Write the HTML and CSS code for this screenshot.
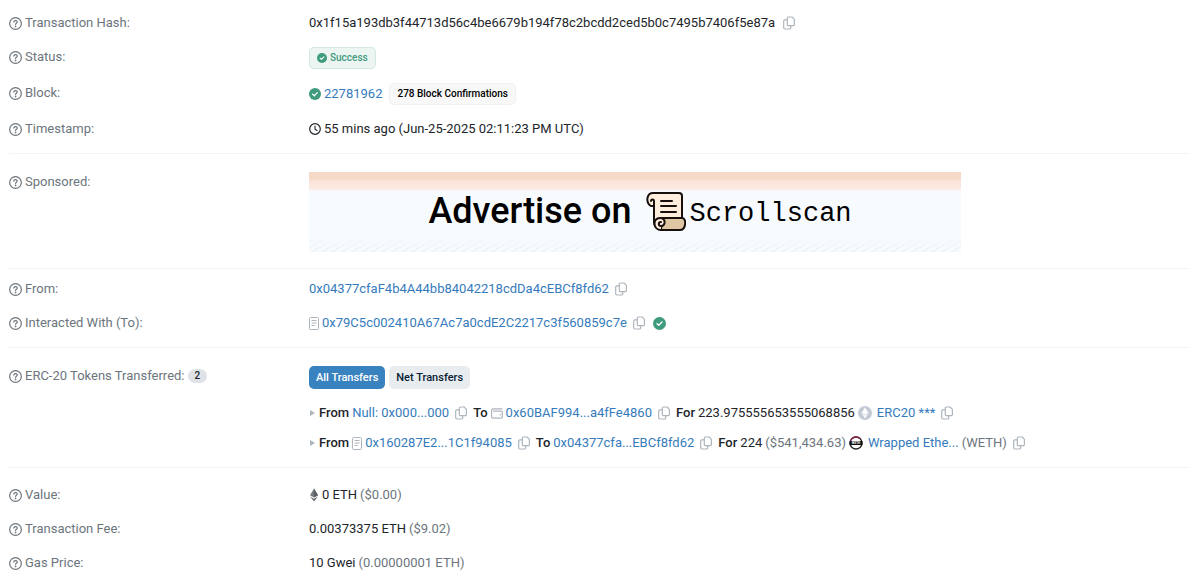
FILE: index.html
```
<!DOCTYPE html>
<html lang="en">
<head>
  <meta charset="UTF-8">
  <meta name="viewport" content="width=device-width, initial-scale=1">
  <title>Transaction Details</title>
  <link rel="stylesheet" href="styles.css">
</head>
<body>

<!-- shared icons -->
<svg class="sprite" aria-hidden="true">
  <symbol id="help" viewBox="0 0 14 14">
    <circle cx="7" cy="7" r="6.3" fill="none" stroke="currentColor" stroke-width="1.3"/>
    <path d="M5.2 5.5c0-1 .7-1.6 1.7-1.6h.3c1 0 1.7.6 1.7 1.5 0 1.2-1.8 1.3-1.8 2.5" fill="none" stroke="currentColor" stroke-width="1.3" stroke-linecap="round"/>
    <circle cx="7.1" cy="10.1" r=".9" fill="currentColor"/>
  </symbol>
  <symbol id="copy" viewBox="0 0 12 14">
    <path d="M5.5 1h3.6L11.4 3.3V8.5a1.2 1.2 0 0 1-1.2 1.2H5.5a1.2 1.2 0 0 1-1.2-1.2V2.2A1.2 1.2 0 0 1 5.5 1z" fill="none" stroke="currentColor" stroke-width="1.2" stroke-linejoin="round"/>
    <path d="M4.3 3.8H1.9A1.2 1.2 0 0 0 .7 5v6.8A1.2 1.2 0 0 0 1.9 13h4.6a1.2 1.2 0 0 0 1.2-1.2V9.9" fill="none" stroke="currentColor" stroke-width="1.2"/>
  </symbol>
  <symbol id="check" viewBox="0 0 14 14">
    <circle cx="7" cy="7" r="7" fill="currentColor"/>
    <path d="M4.3 7.2l1.9 1.8 3.5-3.6" fill="none" stroke="#fff" stroke-width="1.5" stroke-linecap="round" stroke-linejoin="round"/>
  </symbol>
  <symbol id="clock" viewBox="0 0 12 12">
    <circle cx="6" cy="6" r="5.3" fill="none" stroke="currentColor" stroke-width="1.2"/>
    <path d="M6 3v3.2l2.1 1.3" fill="none" stroke="currentColor" stroke-width="1.1" stroke-linecap="round"/>
  </symbol>
  <symbol id="contract" viewBox="0 0 10 13">
    <rect x=".5" y=".5" width="9" height="12" rx="1" fill="none" stroke="currentColor"/>
    <path d="M2.5 3.5h5M2.5 6h5M2.5 8.5h3" stroke="currentColor"/>
  </symbol>
  <symbol id="wallet" viewBox="0 0 12 11">
    <path d="M11 .8H2A1.4 1.4 0 0 0 .6 2.2v6.6A1.4 1.4 0 0 0 2 10.2h8a1.4 1.4 0 0 0 1.4-1.4V4.6A1.4 1.4 0 0 0 10 3.2H2.5" fill="none" stroke="currentColor" stroke-width="1.2" stroke-linecap="round"/>
    <circle cx="9.3" cy="6.7" r=".7" fill="currentColor"/>
  </symbol>
</svg>

<main class="details">
  <section class="group">
    <div class="row">
      <div class="label"><svg class="help"><use href="#help"/></svg>Transaction Hash:</div>
      <div class="value">
        <span>0x1f15a193db3f44713d56c4be6679b194f78c2bcdd2ced5b0c7495b7406f5e87a</span>
        <button class="copy wide" aria-label="Copy hash"><svg><use href="#copy"/></svg></button>
      </div>
    </div>
    <div class="row">
      <div class="label"><svg class="help"><use href="#help"/></svg>Status:</div>
      <div class="value">
        <span class="pill success"><svg><use href="#check"/></svg>Success</span>
      </div>
    </div>
    <div class="row">
      <div class="label"><svg class="help"><use href="#help"/></svg>Block:</div>
      <div class="value">
        <svg class="icon green"><use href="#check"/></svg>
        <a href="#">22781962</a>
        <span class="pill confirmations">278 Block Confirmations</span>
      </div>
    </div>
    <div class="row">
      <div class="label"><svg class="help"><use href="#help"/></svg>Timestamp:</div>
      <div class="value">
        <svg class="icon"><use href="#clock"/></svg>
        <span>55 mins ago (Jun-25-2025 02:11:23 PM UTC)</span>
      </div>
    </div>
  </section>

  <section class="group sponsored">
    <div class="row">
      <div class="label"><svg class="help"><use href="#help"/></svg>Sponsored:</div>
      <div class="value">
        <a class="banner" href="#">
          <span class="banner-text">Advertise on</span>
          <svg class="scroll" viewBox="0 0 40 40" aria-hidden="true">
            <g stroke="#17100e" stroke-width="2" stroke-linejoin="round" stroke-linecap="round">
              <path d="M7 2h26a3 3 0 0 1 3 3v24H15v8c-4 0-7-2-7-6V15H5C-1 11 1 2 7 2z" fill="#ffeede"/>
              <path d="M8 15V10c0-2-3-2-3 0" fill="none"/>
              <path d="M16 27h20c5 0 4 12-2 12H15z" fill="#dfc7a3"/>
              <path d="M15 39c-8 0-9-12-1-12 6 0 6 8 1 8-3 0-3-4 0-4" fill="#ffeede"/>
              <path d="M15 10h11M15 15h15M15 21h15" fill="none"/>
            </g>
          </svg>
          <span class="banner-brand">Scrollscan</span>
        </a>
      </div>
    </div>
  </section>

  <section class="group parties">
    <div class="row">
      <div class="label"><svg class="help"><use href="#help"/></svg>From:</div>
      <div class="value">
        <a href="#">0x04377cfaF4b4A44bb84042218cdDa4cEBCf8fd62</a>
        <button class="copy" aria-label="Copy address"><svg><use href="#copy"/></svg></button>
      </div>
    </div>
    <div class="row">
      <div class="label"><svg class="help"><use href="#help"/></svg>Interacted With (To):</div>
      <div class="value">
        <svg class="contract"><use href="#contract"/></svg>
        <a href="#">0x79C5c002410A67Ac7a0cdE2C2217c3f560859c7e</a>
        <button class="copy" aria-label="Copy address"><svg><use href="#copy"/></svg></button>
        <svg class="verified green"><use href="#check"/></svg>
      </div>
    </div>
  </section>

  <section class="group">
    <div class="row">
      <div class="label"><svg class="help"><use href="#help"/></svg>ERC-20 Tokens Transferred: <span class="count">2</span></div>
      <div class="transfers">
        <div class="tabs">
          <button class="tab active">All Transfers</button>
          <button class="tab">Net Transfers</button>
        </div>
        <div class="value">
          <span class="caret"></span>
          <b>From</b>
          <a href="#">Null: 0x000...000</a>
          <button class="copy" aria-label="Copy address"><svg><use href="#copy"/></svg></button>
          <b>To</b>
          <svg class="wallet"><use href="#wallet"/></svg>
          <a href="#">0x60BAF994...a4fFe4860</a>
          <button class="copy" aria-label="Copy address"><svg><use href="#copy"/></svg></button>
          <b>For</b>
          <span>223.975555653555068856</span>
          <svg class="token" viewBox="0 0 14 14">
            <circle cx="7" cy="7" r="7" fill="#c3cad6"/>
            <path d="M7 1.5l3.5 5.6L7 12.5 3.5 7.1z" fill="#fff"/>
            <path d="M3.8 7.3L7 9l3.2-1.7" fill="none" stroke="#c3cad6" stroke-width=".7"/>
          </svg>
          <a href="#">ERC20 ***</a>
          <button class="copy" aria-label="Copy address"><svg><use href="#copy"/></svg></button>
        </div>
        <div class="value">
          <span class="caret"></span>
          <b>From</b>
          <svg class="contract"><use href="#contract"/></svg>
          <a href="#">0x160287E2...1C1f94085</a>
          <button class="copy" aria-label="Copy address"><svg><use href="#copy"/></svg></button>
          <b>To</b>
          <a href="#">0x04377cfa...EBCf8fd62</a>
          <button class="copy" aria-label="Copy address"><svg><use href="#copy"/></svg></button>
          <b>For</b>
          <span>224</span>
          <span class="muted">($541,434.63)</span>
          <svg class="token" viewBox="0 0 14 14">
            <circle cx="7" cy="7" r="6" fill="#fff" stroke="#222" stroke-width="1.3"/>
            <path d="M1.4 5A6 6 0 0 1 11 2.5" fill="none" stroke="#8e1f4b" stroke-width="1.3"/>
            <rect x=".5" y="5" width="13" height="4" fill="#111"/>
            <text class="token-text" x="7" y="8" text-anchor="middle">WETH</text>
          </svg>
          <a href="#">Wrapped Ethe...</a>
          <span class="muted">(WETH)</span>
          <button class="copy" aria-label="Copy address"><svg><use href="#copy"/></svg></button>
        </div>
      </div>
    </div>
  </section>

  <section class="group fees">
    <div class="row">
      <div class="label"><svg class="help"><use href="#help"/></svg>Value:</div>
      <div class="value">
        <svg class="eth" viewBox="0 0 10 14">
          <path d="M5 .5L9 7.2 5 9.5 1 7.2z" fill="#777b80"/>
          <path d="M5 .5v9L9 7.2z" fill="#5b5f65"/>
          <path d="M1 8.4l4 2.3 4-2.3-4 5.1z" fill="#6b6f75"/>
        </svg>
        <span>0 ETH</span> <span class="muted">($0.00)</span>
      </div>
    </div>
    <div class="row">
      <div class="label"><svg class="help"><use href="#help"/></svg>Transaction Fee:</div>
      <div class="value"><span>0.00373375 ETH</span> <span class="muted">($9.02)</span></div>
    </div>
    <div class="row">
      <div class="label"><svg class="help"><use href="#help"/></svg>Gas Price:</div>
      <div class="value"><span>10 Gwei</span> <span class="muted">(0.00000001 ETH)</span></div>
    </div>
  </section>
</main>

</body>
</html>
```
FILE: styles.css
```
* {
  box-sizing: border-box;
}

body {
  margin: 0;
  background: #fff;
  color: #212529;
  font-family: Roboto, sans-serif;
  font-size: 13px;
  line-height: 20px;
}

.sprite {
  display: none;
}

.details {
  padding: 13px 10px 0 9px;
}

.group {
  display: flex;
  flex-direction: column;
  gap: 14px;
  padding: 18px 0 14px;
  border-bottom: 1px solid #f3f4f6;
}
.group:first-child { padding-top: 0; }
.group:last-child { border-bottom: none; }
.group.sponsored { padding-bottom: 16px; }
.group.parties { padding-top: 10px; }
.group.fees { padding-top: 17px; }

.row {
  display: grid;
  grid-template-columns: 300px 1fr;
}

.label {
  display: flex;
  align-items: center;
  height: 20px;
  gap: 3px;
  color: #6c757d;
}

.help {
  width: 13px;
  height: 13px;
}

.value {
  display: flex;
  align-items: center;
  gap: 3px;
  min-height: 20px;
}

.value svg {
  flex: none;
}

a {
  color: #357bbc;
  text-decoration: none;
}

b {
  font-weight: 500;
}

.muted { color: #6c757d; }
.green { color: #3f9b7d; }

.icon {
  width: 12px;
  height: 12px;
}

.verified {
  width: 13px;
  height: 13px;
  margin-left: 2px;
}

.contract {
  width: 10px;
  height: 13px;
  color: #adb5bd;
}

.wallet {
  width: 12px;
  height: 11px;
  color: #adb5bd;
}

.token {
  width: 14px;
  height: 14px;
  margin-right: 2px;
}

.token-text {
  font-size: 3px;
  font-weight: 700;
  fill: #fff;
}

.eth {
  width: 10px;
  height: 14px;
}

.copy {
  display: flex;
  padding: 0;
  margin: 0 3px;
  border: none;
  background: none;
  color: #adb5bd;
  cursor: pointer;
}
.copy svg { width: 12px; height: 14px; }
.copy.wide { margin-left: 5px; }

.pill {
  display: flex;
  align-items: center;
  gap: 3px;
  height: 22px;
  padding: 0 7px;
  border: 1px solid;
  border-radius: 5px;
  font-size: 10px;
  font-weight: 500;
}
.pill svg { width: 10px; height: 10px; }

.success {
  background: #edf5f3;
  border-color: #d3e8e1;
  color: #3f9b7d;
}

.confirmations {
  margin-left: 4px;
  background: #f8f8f9;
  border-color: #eff0f2;
  color: #000;
}

.count {
  padding: 0 7px;
  border-radius: 7px;
  background: #dfe3e8;
  color: #212529;
  font-size: 10px;
  font-weight: 500;
  line-height: 14px;
}

.banner {
  display: flex;
  align-items: center;
  justify-content: center;
  width: 652px;
  max-width: 100%;
  height: 80px;
  padding: 0 0 2px 10px;
  background:
    linear-gradient(#f7d9c9 7px, #fae2d8 9px, #fdebe5 17px, #f8fbfe 19px, #f8fbfe 64px, #f8fbfe66 80px),
    repeating-linear-gradient(150deg, #e6e8f0 0 1px, #f8fbfe 2px 5px);
  color: #000;
}

.banner-text {
  font-size: 36px;
  font-weight: 500;
  line-height: 40px;
}

.scroll {
  width: 40px;
  height: 40px;
  margin: 0 4px 0 14px;
}

.banner-brand {
  padding-top: 6px;
  font-family: "Liberation Mono", monospace;
  font-size: 27px;
  line-height: 40px;
}

.transfers {
  display: flex;
  flex-direction: column;
  gap: 10px;
}

.tabs {
  display: flex;
  gap: 4px;
  margin-bottom: 4px;
}

.tab {
  height: 23px;
  padding: 0 7px;
  border: none;
  border-radius: 5px;
  background: #e9ecef;
  color: #081d35;
  font-family: inherit;
  font-size: 11px;
  font-weight: 500;
  cursor: pointer;
}
.tab.active { background: #3882c0; color: #fff; }

.caret {
  margin: 0 1px;
  border-left: 5px solid #adb5bd;
  border-top: 3px solid transparent;
  border-bottom: 3px solid transparent;
}
```
